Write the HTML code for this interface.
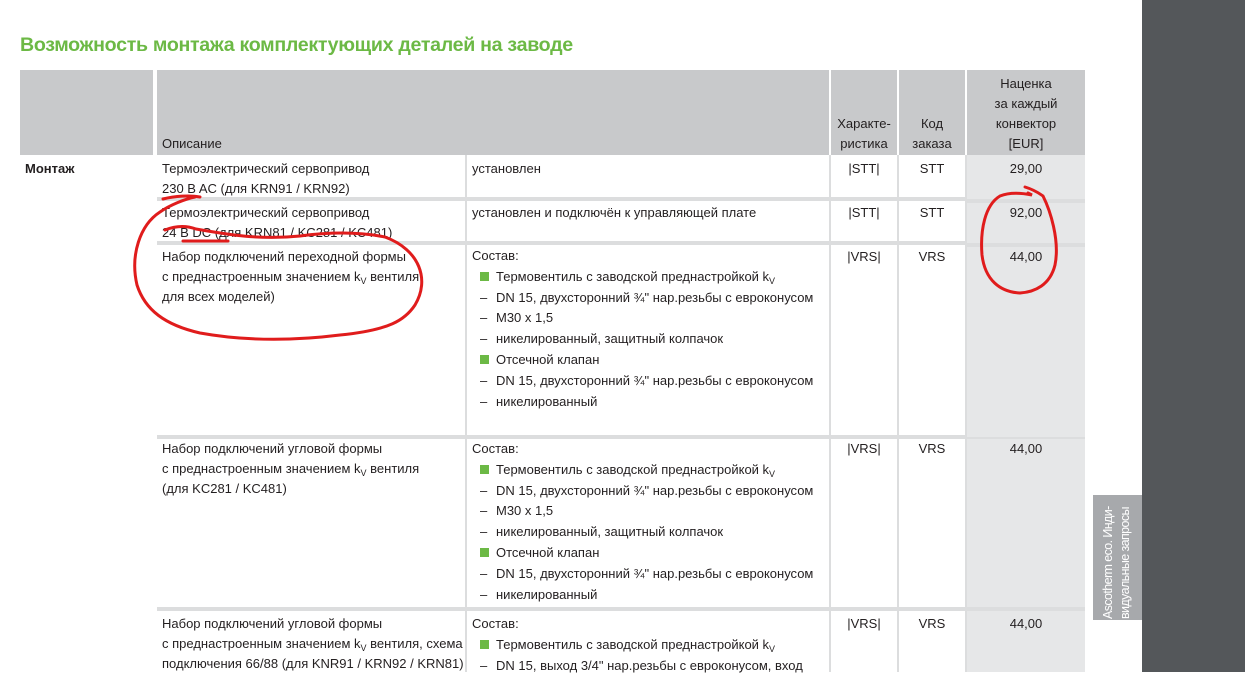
<!DOCTYPE html>
<html><head><meta charset="utf-8"><style>
*{margin:0;padding:0;box-sizing:border-box}
body{width:1245px;height:672px;overflow:hidden;background:#fff;position:relative;font-family:"Liberation Sans",sans-serif;font-size:13px;color:#231f20}
.a{position:absolute}
.dark{left:1142px;top:0;width:103px;height:672px;background:#54575a}
h1{position:absolute;left:20px;top:34px;font-size:19.6px;font-weight:bold;color:#6cb945;letter-spacing:-0.3px;white-space:nowrap}
.hd{background:#c8c9cb;top:70px;height:85px}
.c{position:absolute;background:#fff;padding:6px 5px;line-height:20px;white-space:nowrap}
.p{background:#e6e7e8;text-align:center}
.m{text-align:center}
sub{font-size:9px;line-height:0;vertical-align:-3px}
.li{position:relative;padding-left:24px}
.li:before{content:"–";position:absolute;left:8px}
.sq{position:relative;padding-left:24px}
.sq:before{content:"";position:absolute;left:8px;top:5px;width:9px;height:9px;background:#6cb945}
.ht{position:absolute;bottom:1px;left:0;right:0;text-align:center;line-height:20px}
</style></head><body>
<div class="a dark"></div>
<h1>Возможность монтажа комплектующих деталей на заводе</h1>
<div class="a hd" style="left:20px;width:133px"></div>
<div class="a hd" style="left:157px;width:672px"><div class="ht" style="text-align:left;left:5px">Описание</div></div>
<div class="a hd" style="left:831px;width:66px"><div class="ht">Характе-<br>ристика</div></div>
<div class="a hd" style="left:899px;width:66px"><div class="ht">Код<br>заказа</div></div>
<div class="a hd" style="left:967px;width:118px"><div class="ht">Наценка<br>за каждый<br>конвектор<br>[EUR]</div></div>
<div class="a" style="left:157px;top:155px;width:928px;height:517px;background:#dcddde"></div>
<div class="a" style="left:25px;top:159px;font-weight:bold;line-height:20px">Монтаж</div>

<div class="c" style="left:157px;top:155px;width:308px;height:42px;padding-top:4px">Термоэлектрический сервопривод<br>230 B AC (для KRN91 / KRN92)</div>
<div class="c" style="left:467px;top:155px;width:362px;height:42px;padding-top:4px">установлен</div>
<div class="c m" style="left:831px;top:155px;width:66px;height:42px;padding-top:4px">|STT|</div>
<div class="c m" style="left:899px;top:155px;width:66px;height:42px;padding-top:4px">STT</div>
<div class="c p" style="left:967px;top:155px;width:118px;height:44px;padding-top:4px">29,00</div>

<div class="c" style="left:157px;top:201px;width:308px;height:40px;padding-top:2px">Термоэлектрический сервопривод<br>24 B DC (для KRN81 / KC281 / KC481)</div>
<div class="c" style="left:467px;top:201px;width:362px;height:40px;padding-top:2px">установлен и подключён к управляющей плате</div>
<div class="c m" style="left:831px;top:201px;width:66px;height:40px;padding-top:2px">|STT|</div>
<div class="c m" style="left:899px;top:201px;width:66px;height:40px;padding-top:2px">STT</div>
<div class="c p" style="left:967px;top:203px;width:118px;height:40px;padding-top:0">92,00</div>

<div class="c" style="left:157px;top:245px;width:308px;height:190px;padding-top:2px">Набор подключений переходной формы<br>с преднастроенным значением k<sub>V</sub> вентиля<br>для всех моделей)</div>
<div class="c" style="left:467px;top:245px;width:362px;height:190px;padding-top:1px;line-height:20.8px">Состав:<div class="sq">Термовентиль с заводской преднастройкой k<sub>V</sub></div><div class="li">DN 15, двухсторонний ¾" нар.резьбы с евроконусом</div><div class="li">M30 x 1,5</div><div class="li">никелированный, защитный колпачок</div><div class="sq">Отсечной клапан</div><div class="li">DN 15, двухсторонний ¾" нар.резьбы с евроконусом</div><div class="li">никелированный</div></div>
<div class="c m" style="left:831px;top:245px;width:66px;height:190px;padding-top:2px">|VRS|</div>
<div class="c m" style="left:899px;top:245px;width:66px;height:190px;padding-top:2px">VRS</div>
<div class="c p" style="left:967px;top:247px;width:118px;height:190px;padding-top:0">44,00</div>

<div class="c" style="left:157px;top:439px;width:308px;height:168px;padding-top:0">Набор подключений угловой формы<br>с преднастроенным значением k<sub>V</sub> вентиля<br>(для KC281 / KC481)</div>
<div class="c" style="left:467px;top:439px;width:362px;height:168px;padding-top:0;line-height:20.8px">Состав:<div class="sq">Термовентиль с заводской преднастройкой k<sub>V</sub></div><div class="li">DN 15, двухсторонний ¾" нар.резьбы с евроконусом</div><div class="li">M30 x 1,5</div><div class="li">никелированный, защитный колпачок</div><div class="sq">Отсечной клапан</div><div class="li">DN 15, двухсторонний ¾" нар.резьбы с евроконусом</div><div class="li">никелированный</div></div>
<div class="c m" style="left:831px;top:439px;width:66px;height:168px;padding-top:0">|VRS|</div>
<div class="c m" style="left:899px;top:439px;width:66px;height:168px;padding-top:0">VRS</div>
<div class="c p" style="left:967px;top:439px;width:118px;height:168px;padding-top:0">44,00</div>

<div class="c" style="left:157px;top:611px;width:308px;height:61px;padding-top:3px">Набор подключений угловой формы<br>с преднастроенным значением k<sub>V</sub> вентиля, схема<br>подключения 66/88 (для KNR91 / KRN92 / KRN81)</div>
<div class="c" style="left:467px;top:611px;width:362px;height:61px;padding-top:3px;line-height:20.8px">Состав:<div class="sq">Термовентиль с заводской преднастройкой k<sub>V</sub></div><div class="li">DN 15, выход 3/4" нар.резьбы с евроконусом, вход</div></div>
<div class="c m" style="left:831px;top:611px;width:66px;height:61px;padding-top:3px">|VRS|</div>
<div class="c m" style="left:899px;top:611px;width:66px;height:61px;padding-top:3px">VRS</div>
<div class="c p" style="left:967px;top:611px;width:118px;height:61px;padding-top:3px">44,00</div>

<div class="a" style="left:1093px;top:495px;width:49px;height:125px;background:#a7a9ac"></div>
<div class="a" style="left:1056px;top:541px;width:122px;height:34px;transform:rotate(-90deg);color:#fff;font-size:12.5px;line-height:17px;letter-spacing:-0.6px;white-space:nowrap;text-align:left">Ascotherm eco. Инди-<br>видуальные запросы</div>

<svg class="a" style="left:0;top:0" width="1245" height="672" fill="none" stroke="#e01c1c" stroke-width="3" stroke-linecap="round">
<path d="M165 230 C175 226 185 225 196 229 C230 235 260 240 300 236 C330 232 360 232 385 237 C420 250 430 280 415 305 C405 320 390 330 340 335 C300 340 250 342 200 333 C165 325 145 310 137 285 C130 255 140 225 160 212 C170 205 185 199 195 197"/>
<path d="M183 241 L228 241"/>
<path d="M163 199 C175 196 190 195 200 197"/>
<path d="M1025 187 C1035 190 1040 194 1043 196 C1050 210 1060 240 1055 265 C1050 285 1035 292 1020 293 C1000 292 985 280 982 255 C980 230 985 205 1000 196 C1010 192 1022 193 1032 195 L1028 193"/>
</svg>
</body></html>
